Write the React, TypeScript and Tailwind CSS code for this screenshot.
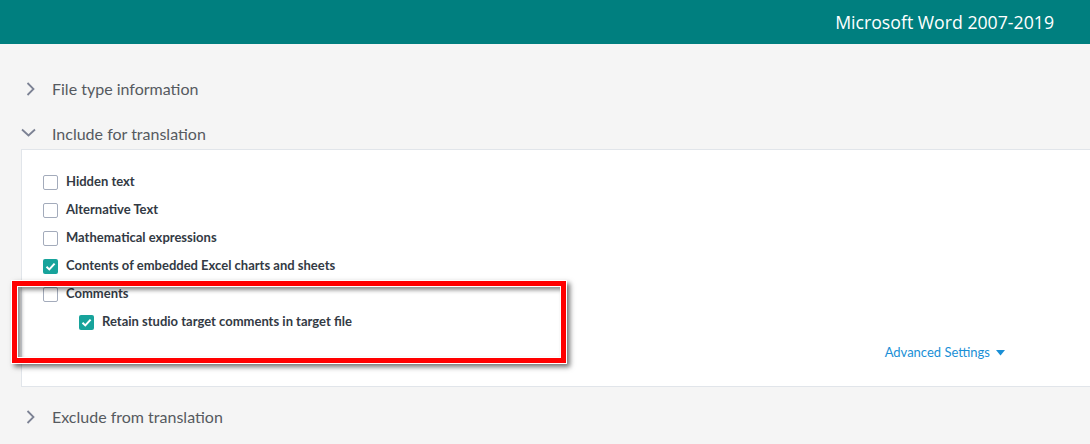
import React from "react";

const Chevron = ({ open }: { open?: boolean }) =>
  open ? (
    <svg width="16" height="16" viewBox="0 0 16 16" className="block">
      <path d="M2 5.5 L8.5 11.5 L15 5.5" fill="none" stroke="#7c8294" strokeWidth="1.8" />
    </svg>
  ) : (
    <svg width="16" height="16" viewBox="0 0 16 16" className="block">
      <path d="M5.5 2 L11.5 8 L5.5 14" fill="none" stroke="#7c8294" strokeWidth="1.8" />
    </svg>
  );

const Box = ({ checked }: { checked?: boolean }) =>
  checked ? (
    <span className="flex h-[15px] w-[15px] shrink-0 items-center justify-center rounded-[2px] bg-[#17a39b]">
      <svg width="11" height="11" viewBox="0 0 11 11">
        <path d="M1.5 5.8 L4.3 8.4 L9.6 2.6" fill="none" stroke="#fff" strokeWidth="2" />
      </svg>
    </span>
  ) : (
    <span className="block h-[15px] w-[15px] shrink-0 rounded-[2px] border border-[#a3abbb] bg-white" />
  );

const Row = ({ label, checked, indent }: { label: string; checked?: boolean; indent?: boolean }) => (
  <div className={`flex h-[28px] items-center gap-[8px] ${indent ? "pl-[57px]" : "pl-[21px]"}`}>
    <Box checked={checked} />
    <span className="text-[13px] font-bold text-[#333a44]">{label}</span>
  </div>
);

export default function App() {
  return (
    <div
      className="relative h-[444px] w-[1090px] overflow-hidden bg-[#f5f5f5]"
      style={{ fontFamily: "Lato, 'Open Sans', sans-serif" }}
    >
      <div className="flex h-[44px] items-center justify-end bg-[#007f7f] pr-[36px]">
        <span className="text-[17.7px] text-white" style={{ fontFamily: "'Open Sans', sans-serif" }}>
          Microsoft Word 2007-2019
        </span>
      </div>
      <div className="h-[22px]" />
      <div className="flex h-[46px] items-center gap-[14.5px] pl-[21.5px]">
        <Chevron />
        <span className="text-[16px] text-[#555a60]">File type information</span>
      </div>
      <div className="flex h-[37px] items-start gap-[16px] pl-[20px] pt-[12px]">
        <Chevron open />
        <span className="text-[16px] leading-[20px] text-[#555a60]">Include for translation</span>
      </div>
      <div className="ml-[21px] h-[238px] border border-r-0 border-[#e1e5ea] bg-white pt-[18px]">
        <Row label="Hidden text" />
        <Row label="Alternative Text" />
        <Row label="Mathematical expressions" />
        <Row label="Contents of embedded Excel charts and sheets" checked />
        <Row label="Comments" />
        <Row label="Retain studio target comments in target file" checked indent />
        <div className="flex h-[30px] items-center justify-end pr-[85px] pt-[3px]">
          <span className="text-[13px] text-[#1a8fd6]">Advanced Settings</span>
          <svg width="9" height="6" viewBox="0 0 9 6" className="ml-[6px]">
            <path d="M0 0 H9 L4.5 5.5 Z" fill="#1a8fd6" />
          </svg>
        </div>
      </div>
      <div className="mt-[7px] flex h-[46px] items-center gap-[14.5px] pl-[21.5px]">
        <Chevron />
        <span className="text-[16px] text-[#555a60]">Exclude from translation</span>
      </div>

      <div className="absolute left-[11px] top-[280px] h-[84px] w-[556px] border border-white shadow-[3px_3px_5px_rgba(0,0,0,0.55)]">
        <div className="h-full w-full border-[5px] border-[#ff0000]">
          <div className="h-full w-full border border-white shadow-[inset_3px_3px_4px_rgba(0,0,0,0.45)]" />
        </div>
      </div>
    </div>
  );
}
